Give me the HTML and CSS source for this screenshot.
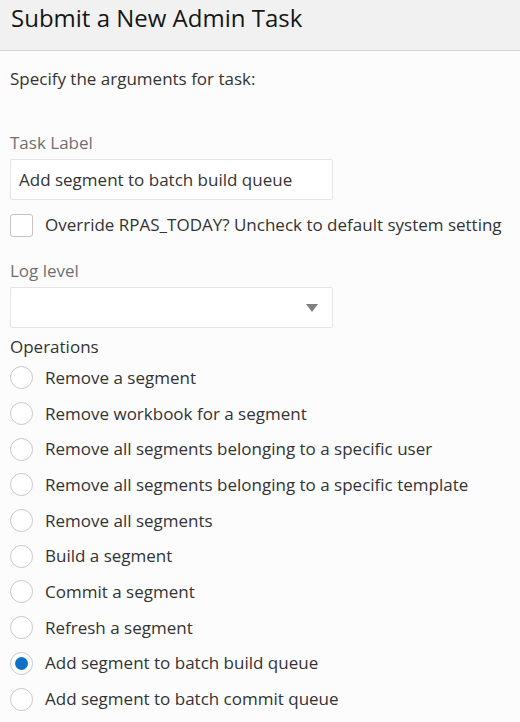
FILE: index.html
```html
<!DOCTYPE html>
<html>
<head>
<meta charset="utf-8">
<link rel="stylesheet" href="styles.css">
</head>
<body>
<div class="header"><h1 class="title">Submit a New Admin Task</h1></div>
<div class="content">
  <p class="intro">Specify the arguments for task:</p>
  <div class="field">
    <label class="label">Task Label</label>
    <div class="input">Add segment to batch build queue</div>
  </div>
  <div class="check-row">
    <span class="checkbox"></span>
    <span class="check-text">Override RPAS_TODAY? Uncheck to default system setting</span>
  </div>
  <div class="field field-log">
    <label class="label">Log level</label>
    <div class="input select"><span class="arrow"></span></div>
  </div>
  <div class="ops-label">Operations</div>
  <div class="radios">
    <div class="radio-row"><span class="radio"></span><span class="radio-text">Remove a segment</span></div>
    <div class="radio-row"><span class="radio"></span><span class="radio-text">Remove workbook for a segment</span></div>
    <div class="radio-row"><span class="radio"></span><span class="radio-text">Remove all segments belonging to a specific user</span></div>
    <div class="radio-row"><span class="radio"></span><span class="radio-text">Remove all segments belonging to a specific template</span></div>
    <div class="radio-row"><span class="radio"></span><span class="radio-text">Remove all segments</span></div>
    <div class="radio-row"><span class="radio"></span><span class="radio-text">Build a segment</span></div>
    <div class="radio-row"><span class="radio"></span><span class="radio-text">Commit a segment</span></div>
    <div class="radio-row"><span class="radio"></span><span class="radio-text">Refresh a segment</span></div>
    <div class="radio-row"><span class="radio checked"></span><span class="radio-text">Add segment to batch build queue</span></div>
    <div class="radio-row"><span class="radio"></span><span class="radio-text">Add segment to batch commit queue</span></div>
  </div>
</div>
</body>
</html>
```

FILE: styles.css
```css
* { box-sizing: border-box; }
html, body { margin: 0; padding: 0; background: #fcfcfc; }
body {
  font-family: "Open Sans", "Noto Sans", sans-serif;
  color: #333;
  width: 520px;
  height: 722px;
  overflow: hidden;
}
.header {
  height: 51px;
  background: #f1f1f1;
  border-bottom: 1px solid #d3d3d3;
  padding: 0 11px;
}
.title {
  margin: 0;
  font-weight: 400;
  font-size: 24px;
  line-height: 36px;
  color: #161616;
}
.content { padding: 0 10px; }
.intro {
  margin: 0;
  padding-top: 16px;
  font-size: 17px;
  line-height: 24px;
  color: #333;
}
.field { margin-top: 40px; }
.label {
  display: block;
  font-size: 17px;
  line-height: 24px;
  color: #707070;
  margin-bottom: 4px;
}
.input {
  width: 323px;
  height: 41px;
  border: 1px solid #e4e4e4;
  background: #fff;
  border-radius: 2px;
  font-size: 17px;
  line-height: 39px;
  padding: 0 8px;
  color: #333;
}
.check-row {
  display: flex;
  align-items: center;
  gap: 12px;
  margin-top: 13px;
}
.checkbox {
  width: 23px;
  height: 23px;
  border: 1px solid #c4c4c4;
  border-radius: 3px;
  background: #fff;
  flex: none;
}
.check-text { font-size: 17px; line-height: 24px; color: #333; }
.field-log { margin-top: 22px; }
.select { position: relative; }
.arrow {
  position: absolute;
  right: 14px;
  top: 16px;
  width: 0; height: 0;
  border-left: 6px solid transparent;
  border-right: 6px solid transparent;
  border-top: 8px solid #808080;
}
.ops-label {
  margin-top: 7px;
  font-size: 17px;
  line-height: 24px;
  color: #333;
}
.radios { display: flex; flex-direction: column; margin-top: 1px; }
.radio-row {
  display: flex;
  align-items: center;
  gap: 12px;
  height: 35.7px;
}
.radio {
  width: 23px;
  height: 23px;
  border: 1px solid #c8c8c8;
  border-radius: 50%;
  background: #fff;
  flex: none;
  position: relative;
}
.radio.checked::after {
  content: "";
  position: absolute;
  left: 4px; top: 4px;
  width: 13px; height: 13px;
  border-radius: 50%;
  background: #0f72c8;
}
.radio-text { font-size: 17px; line-height: 24px; color: #333; }
```
